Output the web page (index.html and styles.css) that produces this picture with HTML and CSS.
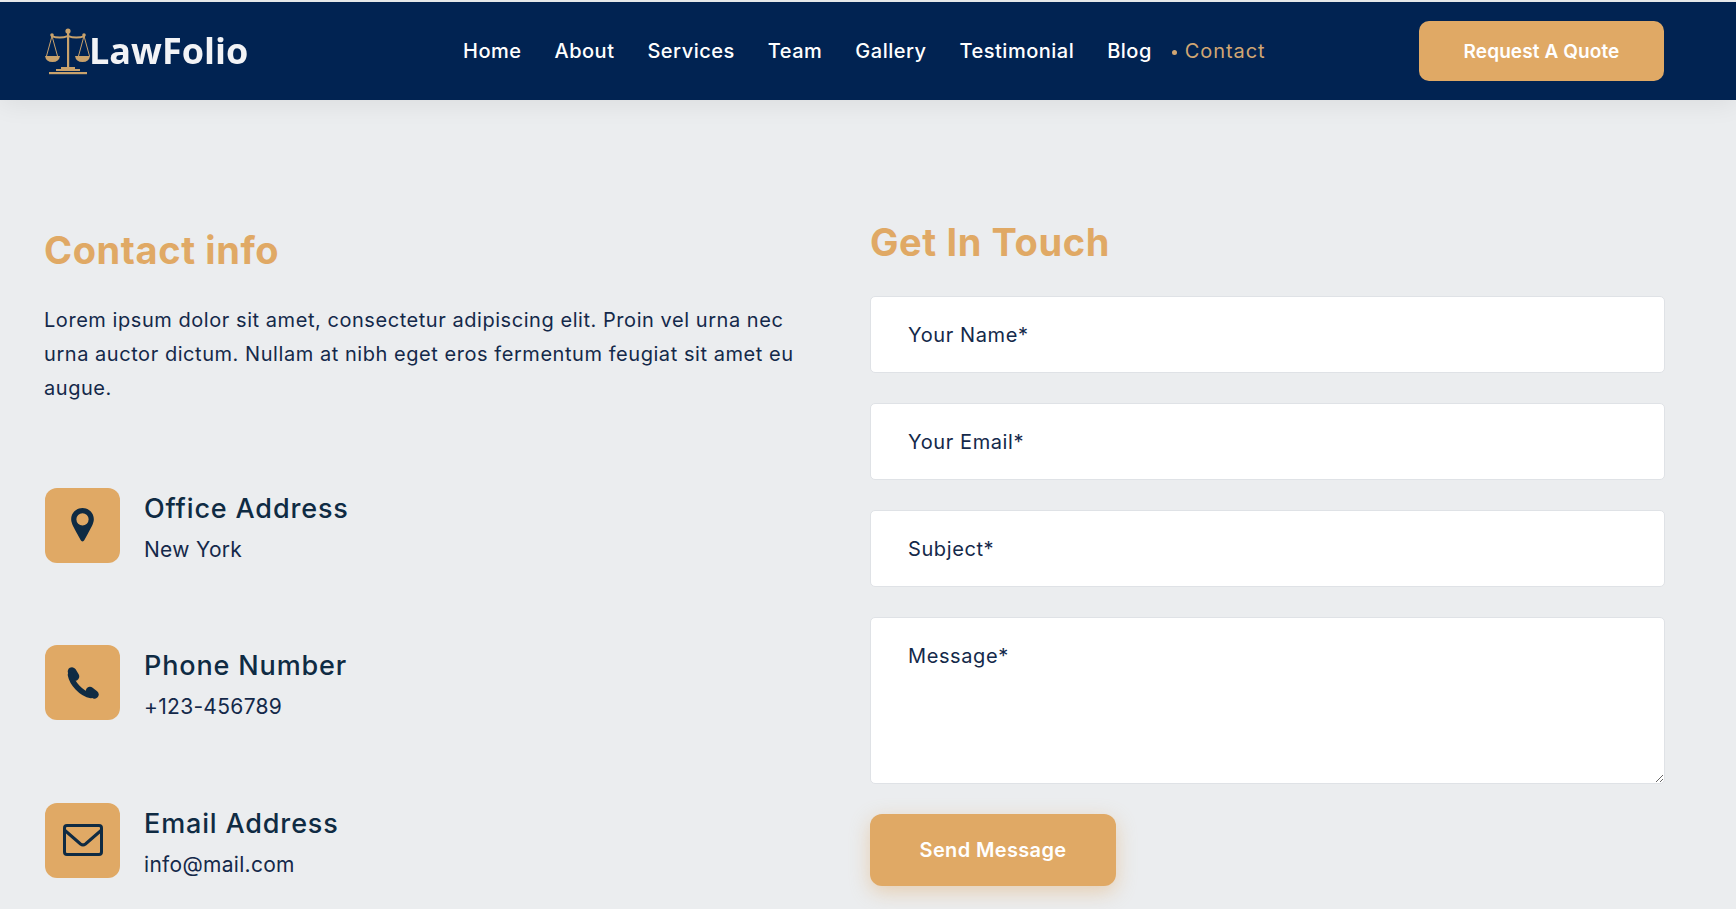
FILE: index.html
```html
<!DOCTYPE html>
<html lang="en">
<head>
    <meta charset="UTF-8">
    <title>LawFolio - Contact</title>
    <link rel="stylesheet" href="styles.css">
</head>
<body>
    <header class="topbar">
        <a class="logo" href="#">
            <svg class="logo-mark" viewBox="0 0 46 48" width="46" height="48">
                <g fill="none" stroke="#c9a26c" stroke-width="1">
                    <path d="M7 9 L1.5 29 M7 9 L12.5 29 M39 9 L33.5 29 M39 9 L44.5 29"/>
                </g>
                <g fill="#c9a26c">
                    <circle cx="23" cy="4" r="2.6"/>
                    <rect x="22" y="6" width="2.2" height="34"/>
                    <path d="M6 8 Q15 11 23 8 Q31 11 40 8 L40 10 Q31 13 23 10 Q15 13 6 10 Z"/>
                    <circle cx="7" cy="8" r="1.8"/>
                    <circle cx="39" cy="8" r="1.8"/>
                    <path d="M0 29 H15 Q14 35 7.5 35 Q1 35 0 29 Z"/>
                    <path d="M30 29 H45 Q44 35 37.500 35 Q31 35 30 29 Z"/>
                    <rect x="16" y="40" width="14" height="2"/>
                    <rect x="11" y="42" width="24" height="2"/>
                    <rect x="4" y="45" width="38" height="2.200"/>
                </g>
            </svg>
            <span class="logo-text">LawFolio</span>
        </a>
        <nav class="nav">
            <a href="#">Home</a>
            <a href="#">About</a>
            <a href="#">Services</a>
            <a href="#">Team</a>
            <a href="#">Gallery</a>
            <a href="#">Testimonial</a>
            <a href="#">Blog</a>
            <a class="active" href="#">Contact</a>
        </nav>
        <a class="quote-btn" href="#">Request A Quote</a>
    </header>

    <main class="contact">
        <section class="info">
            <h2>Contact info</h2>
            <p class="intro">Lorem ipsum dolor sit amet, consectetur adipiscing elit. Proin vel urna nec urna auctor dictum. Nullam at nibh eget eros fermentum feugiat sit amet eu augue.</p>
            <div class="info-list">
                <div class="info-item">
                    <div class="info-icon">
                        <svg class="pin" viewBox="0 0 24 36" width="23" height="34">
                            <path fill="#0f2b43" fill-rule="evenodd" d="M12 0C5.200 0 0 5.200 0 12c0 4.500 3.500 10 6.500 15.500L10 34c.9 1.800 3.100 1.800 4 0l3.500-6.500C20.500 22 24 16.500 24 12 24 5.200 18.800 0 12 0Zm0 5.500a6.500 6.500 0 1 1 0 13 6.500 6.500 0 0 1 0-13Z"/>
                        </svg>
                    </div>
                    <div class="info-text">
                        <h3>Office Address</h3>
                        <p>New York</p>
                    </div>
                </div>
                <div class="info-item">
                    <div class="info-icon">
                        <svg viewBox="0 0 32 32" width="32" height="32">
                            <g fill="none" stroke="#0f2b43" stroke-linecap="round">
                                <path d="M5 4.500 L8 9.500" stroke-width="8.500"/>
                                <path d="M3.500 8 C5 16 14 27 24 28.500" stroke-width="5.500"/>
                                <path d="M23 24 L27.500 27.500" stroke-width="8.500"/>
                            </g>
                        </svg>
                    </div>
                    <div class="info-text">
                        <h3>Phone Number</h3>
                        <p>+123-456789</p>
                    </div>
                </div>
                <div class="info-item">
                    <div class="info-icon">
                        <svg viewBox="0 0 40 32" width="40" height="32">
                            <rect x="1.500" y="1.500" width="37" height="29" rx="2.500" fill="none" stroke="#0f2b43" stroke-width="3"/>
                            <path d="M2 6.500 L17.500 20 Q20 21.800 22.500 20 L38 6.500" fill="none" stroke="#0f2b43" stroke-width="3"/>
                        </svg>
                    </div>
                    <div class="info-text">
                        <h3>Email Address</h3>
                        <p>info@mail.com</p>
                    </div>
                </div>
            </div>
        </section>

        <section class="touch">
            <h2>Get In Touch</h2>
            <form class="touch-form">
                <input type="text" placeholder="Your Name*">
                <input type="email" placeholder="Your Email*">
                <input type="text" placeholder="Subject*">
                <textarea placeholder="Message*"></textarea>
                <button type="button" class="send-btn">Send Message</button>
            </form>
        </section>
    </main>
</body>
</html>
```

FILE: styles.css
```css
* {
    box-sizing: border-box;
}
html, body {
    height: 100%;
}
body {
    margin: 0;
    padding-top: 2px;
    overflow: hidden;
    background: #ebedef;
    font-family: "Inter", "Open Sans", sans-serif;
    color: #0f2b43;
}
a {
    text-decoration: none;
}
.topbar {
    height: 98px;
    padding: 0 72px 0 45px;
    display: flex;
    align-items: center;
    background: #012352;
    box-shadow: 0 4px 24px rgba(0, 0, 0, 0.07);
}
.logo {
    width: 293px;
    display: flex;
    align-items: center;
    flex: none;
    filter: blur(0.4px);
}
.logo-mark {
    flex: none;
}
.logo-text {
    margin: 0 0 2px -2px;
    font-family: "Open Sans", sans-serif;
    font-weight: 700;
    font-size: 36px;
    color: #f2f3f6;
}
.nav {
    flex: 1;
    display: flex;
    gap: 33px;
    padding-left: 125px;
}
.nav a {
    font-size: 20px;
    font-weight: 500;
    letter-spacing: 0.5px;
    color: #fff;
}
.nav .active {
    position: relative;
    font-weight: 400;
    letter-spacing: 0.9px;
    color: #d1a673;
}
.nav .active::before {
    content: "";
    position: absolute;
    left: -13px;
    top: 11px;
    width: 5px;
    height: 5px;
    border-radius: 50%;
    background: #d1a673;
}
.quote-btn {
    width: 245px;
    height: 60px;
    flex: none;
    display: flex;
    align-items: center;
    justify-content: center;
    border-radius: 10px;
    background: #e0a965;
    color: #fff;
    font-size: 19px;
    font-weight: 600;
    letter-spacing: 0.1px;
}
.contact {
    display: grid;
    grid-template-columns: 826px 795px;
    padding: 0 71px 0 44px;
}
h2 {
    margin: 0;
    font-size: 38px;
    line-height: 44px;
    font-weight: 700;
    letter-spacing: 0.6px;
    color: #e0a965;
}
.info {
    padding-top: 128px;
}
.intro {
    margin: 31px 0 0;
    width: 768px;
    font-size: 20px;
    line-height: 34px;
    letter-spacing: 0.55px;
    color: #14294a;
}
.info-list {
    margin-top: 83px;
    display: flex;
    flex-direction: column;
    gap: 78.4px;
}
.info-item {
    display: flex;
    gap: 24px;
}
.info-icon {
    width: 75px;
    height: 75px;
    margin-left: 1px;
    flex: none;
    display: flex;
    align-items: center;
    justify-content: center;
    border-radius: 12px;
    background: #e0a965;
}
.pin {
    margin-bottom: 2px;
}
.info-text {
    padding-top: 1px;
}
h3 {
    margin: 0;
    font-size: 27px;
    line-height: 40px;
    font-weight: 500;
    letter-spacing: 0.85px;
}
.info-item p {
    margin: 4px 0 0;
    font-size: 21px;
    line-height: 34px;
    letter-spacing: 0.3px;
    color: #14294a;
}
.touch {
    padding-top: 120px;
}
.touch-form {
    margin-top: 32px;
    display: flex;
    flex-direction: column;
    align-items: flex-start;
    gap: 30px;
}
input, textarea {
    display: block;
    width: 100%;
    padding: 0 37px;
    border: 1px solid #dfe2e6;
    border-radius: 5px;
    background: #fff;
    font-family: inherit;
    font-size: 20px;
    letter-spacing: 0.6px;
    color: #14294a;
    outline: none;
}
input {
    height: 77px;
}
textarea {
    height: 167px;
    padding-top: 23px;
    line-height: 30px;
}
::placeholder {
    color: #14294a;
    opacity: 1;
}
.send-btn {
    width: 246px;
    height: 72px;
    border: none;
    border-radius: 12px;
    background: #e0a965;
    box-shadow: 0 6px 20px rgba(224, 169, 101, 0.45);
    color: #fff;
    font-family: inherit;
    font-size: 20px;
    font-weight: 600;
    letter-spacing: 0.35px;
}
```
